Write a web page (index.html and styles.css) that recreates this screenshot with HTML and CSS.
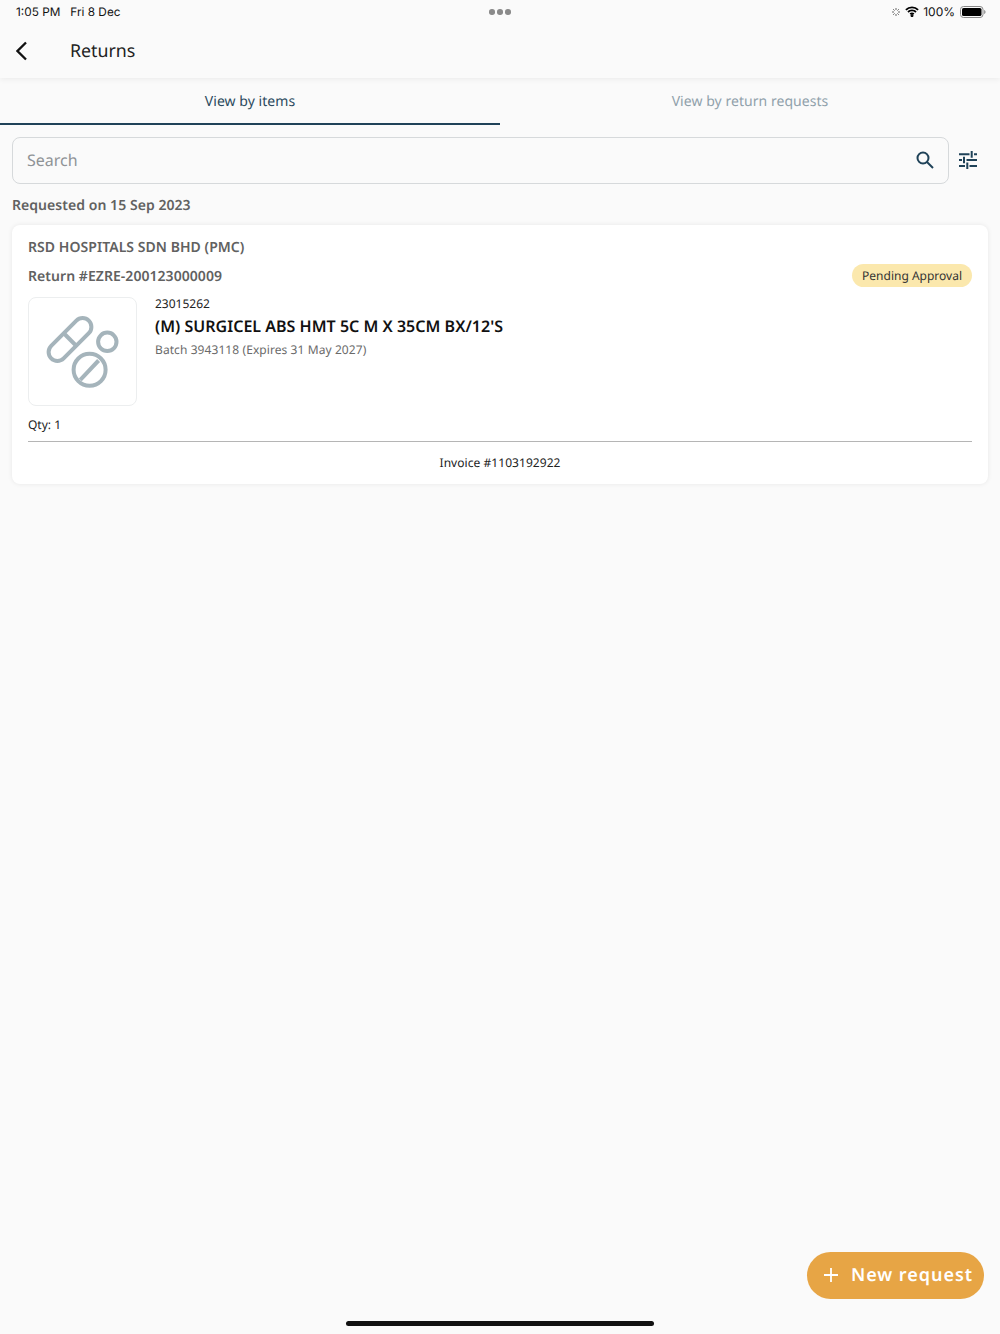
FILE: index.html
```html
<!DOCTYPE html>
<html lang="en">
<head>
<meta charset="utf-8">
<title>Returns</title>
<link rel="stylesheet" href="styles.css">
</head>
<body>
<div class="app">
  <header class="topbar">
    <div class="status">
      <div class="status-left"><span>1:05 PM</span><span>Fri 8 Dec</span></div>
      <div class="dots"><i></i><i></i><i></i></div>
      <div class="status-right">
        <svg class="spin" width="10" height="10" viewBox="0 0 10 10" stroke="#666" stroke-width="1" fill="none"><path d="M5 1v2M5 7v2M1 5h2M7 5h2M2.200 2.200l1.400 1.400M6.400 6.400l1.400 1.400M2.200 7.800l1.400-1.400M6.400 3.600l1.400-1.400"/></svg>
        <svg class="wifi" width="14" height="11" viewBox="0 0 14 11" fill="none" stroke="#000" stroke-width="1.800"><path d="M.9 3.900a8.600 8.600 0 0 1 12.200 0M3 6a5.600 5.600 0 0 1 8 0M5.200 8.100a2.500 2.500 0 0 1 3.600 0"/><circle cx="7" cy="9.600" r=".6" fill="#000"/></svg>
        <span class="pct">100%</span>
        <svg width="26" height="12" viewBox="0 0 26 12"><rect x=".5" y=".5" width="22.500" height="11" rx="3" fill="none" stroke="#888"/><rect x="2" y="2" width="19.500" height="8" rx="1.600" fill="#000"/><path d="M24.200 4v4c.8-.3 1.300-1.100 1.300-2s-.5-1.700-1.300-2z" fill="#888"/></svg>
      </div>
    </div>
    <div class="navbar">
      <svg class="back" width="12" height="20" viewBox="0 0 12 20" fill="none" stroke="#111" stroke-width="2.300"><path d="M10 1.500 1.500 10 10 18.500"/></svg>
      <h1 class="title">Returns</h1>
    </div>
  </header>

  <nav class="tabs">
    <div class="tab active">View by items</div>
    <div class="tab">View by return requests</div>
  </nav>

  <div class="search-row">
    <div class="search">
      <span class="placeholder">Search</span>
      <svg width="20" height="20" viewBox="0 0 20 20" fill="none" stroke="#1f4258" stroke-width="2"><circle cx="8" cy="8" r="5.500"/><path d="m12 12 6 6"/></svg>
    </div>
    <svg class="filter" width="18" height="18" viewBox="0 0 18 18" fill="none" stroke="#1f4258" stroke-width="2"><path d="M0 3.300h10.500M15 3.300h3M12.700 0v6.700M0 9h3M7.500 9h10.500M5 5.700v6.600M0 15h6M10.500 15h7.500M8.300 11.500V18"/></svg>
  </div>

  <p class="group-label">Requested on 15 Sep 2023</p>

  <section class="card">
    <div class="company">RSD HOSPITALS SDN BHD (PMC)</div>
    <div class="return-row">
      <span class="return-id">Return #EZRE-200123000009</span>
      <span class="badge">Pending Approval</span>
    </div>
    <div class="item">
      <div class="thumb">
        <svg width="74" height="74" viewBox="0 0 74 74" fill="none" stroke="#a5b4bb" stroke-width="4">
          <g transform="rotate(45 24 24.500)"><rect x="15.200" y="-2.100" width="17.600" height="53.200" rx="8.800"/><path d="M15.200 24.500h17.600"/></g>
          <circle cx="61.300" cy="26.800" r="9.200"/>
          <circle cx="43.600" cy="54.800" r="16"/>
          <path d="m34.300 64.800 18.300-19.300"/>
        </svg>
      </div>
      <div class="item-info">
        <div class="sku">23015262</div>
        <div class="name">(M) SURGICEL ABS HMT 5C M X 35CM BX/12'S</div>
        <div class="batch">Batch 3943118 (Expires 31 May 2027)</div>
      </div>
    </div>
    <div class="qty">Qty: 1</div>
    <div class="invoice">Invoice #1103192922</div>
  </section>

  <button class="fab"><svg width="16" height="16" viewBox="0 0 16 16" stroke="#fff" stroke-width="1.800"><path d="M8 1v14M1 8h14"/></svg><span>New request</span></button>
  <div class="home-bar"></div>
</div>
</body>
</html>
```

FILE: styles.css
```css
* { box-sizing: border-box; }
html, body { margin: 0; padding: 0; }
body { font-family: "Noto Sans", "Open Sans", sans-serif; background: #fafafa; color: #111; text-rendering: geometricPrecision; }
.app { position: relative; width: 1000px; height: 1334px; overflow: hidden; background: #fafafa; }

.topbar { height: 78px; background: #fafafa; box-shadow: 0 1px 6px rgba(0,0,0,.07); position: relative; }
.status { position: relative; display: flex; justify-content: space-between; align-items: center; height: 24px; padding: 0 14px 1px 16px; font-family: Inter, Roboto, sans-serif; font-size: 11.800px; color: #111; }
.status-left { display: flex; gap: 10px; }
.dots { position: absolute; left: 489px; top: 9px; display: flex; gap: 2.500px; }
.dots i { width: 5.500px; height: 5.500px; border-radius: 50%; background: #8a8a8a; }
.status-right { display: flex; align-items: center; gap: 5px; }
.spin { margin-right: -1px; }
.wifi { margin-right: -1px; }
.pct { font-size: 12px; }
.navbar { display: flex; align-items: center; height: 54px; padding: 0 0 0 16px; }
.back { margin-top: -1px; }
.title { margin: 0 0 0 42px; font-size: 17.800px; font-weight: 400; color: #222; line-height: 18px; }

.tabs { display: flex; height: 47px; }
.tab { flex: 1; display: flex; align-items: center; justify-content: center; font-size: 14px; color: #90a1ab; letter-spacing: .05px; }
.tab.active { color: #2c4a5e; border-bottom: 2px solid #1f4258; padding-top: 2px; }

.search-row { display: flex; align-items: center; padding: 12px 0 0 12px; }
.search { flex: none; width: 937px; height: 47px; display: flex; align-items: center; justify-content: space-between; padding: 0 13px 2px 14px; border: 1px solid #d6d9db; border-radius: 8px; background: #fafafa; }
.placeholder { font-size: 16px; color: #8f9396; }
.filter { margin-left: 10px; margin-top: -1px; }

.group-label { margin: 12px 0 0 12px; font-size: 14px; line-height: 20px; font-weight: 600; color: #616161; letter-spacing: .05px; }

.card { margin: 9px 12px 0; height: 259px; padding: 13px 16px 0; background: #fff; border-radius: 8px; box-shadow: 0 0 5px rgba(0,0,0,.08); }
.company { font-size: 14px; line-height: 20px; font-weight: 600; color: #616161; letter-spacing: .05px; }
.return-row { display: flex; justify-content: space-between; align-items: center; margin-top: 5px; height: 26px; }
.return-id { font-size: 14px; font-weight: 600; color: #616161; letter-spacing: .05px; }
.badge { background: #fbe8ad; border-radius: 12px; height: 23px; margin-top: -1px; padding: 0 10px; font-size: 12px; line-height: 23px; color: #333; }
.item { display: flex; margin-top: 8px; }
.thumb { flex: none; width: 109px; height: 109px; display: flex; align-items: center; justify-content: center; border: 1px solid #eceeef; border-radius: 8px; background: #fff; }
.item-info { margin-left: 18px; }
.sku { font-size: 12px; line-height: 14px; color: #222; }
.name { font-size: 16px; line-height: 20px; margin-top: 5px; font-weight: 600; color: #111; letter-spacing: .02px; }
.batch { font-size: 12px; line-height: 16px; margin-top: 6px; color: #6a6a6a; letter-spacing: .08px; }
.qty { font-size: 12px; line-height: 16px; margin-top: 11px; padding-bottom: 8px; border-bottom: 1px solid #b5b5b5; color: #222; }
.invoice { font-size: 12px; line-height: 16px; text-align: center; margin-top: 13px; color: #222; letter-spacing: .05px; }

.fab { position: absolute; left: 807px; top: 1252px; width: 177px; height: 47px; display: flex; align-items: center; gap: 12px; padding: 0 0 2px 16px; border: 0; border-radius: 24px; background: #e7a545; color: #fff; font-family: inherit; font-size: 18px; font-weight: 600; letter-spacing: .95px; text-rendering: geometricPrecision; }
.home-bar { position: absolute; left: 346px; top: 1321px; width: 308px; height: 5px; border-radius: 3px; background: #111; }
```
